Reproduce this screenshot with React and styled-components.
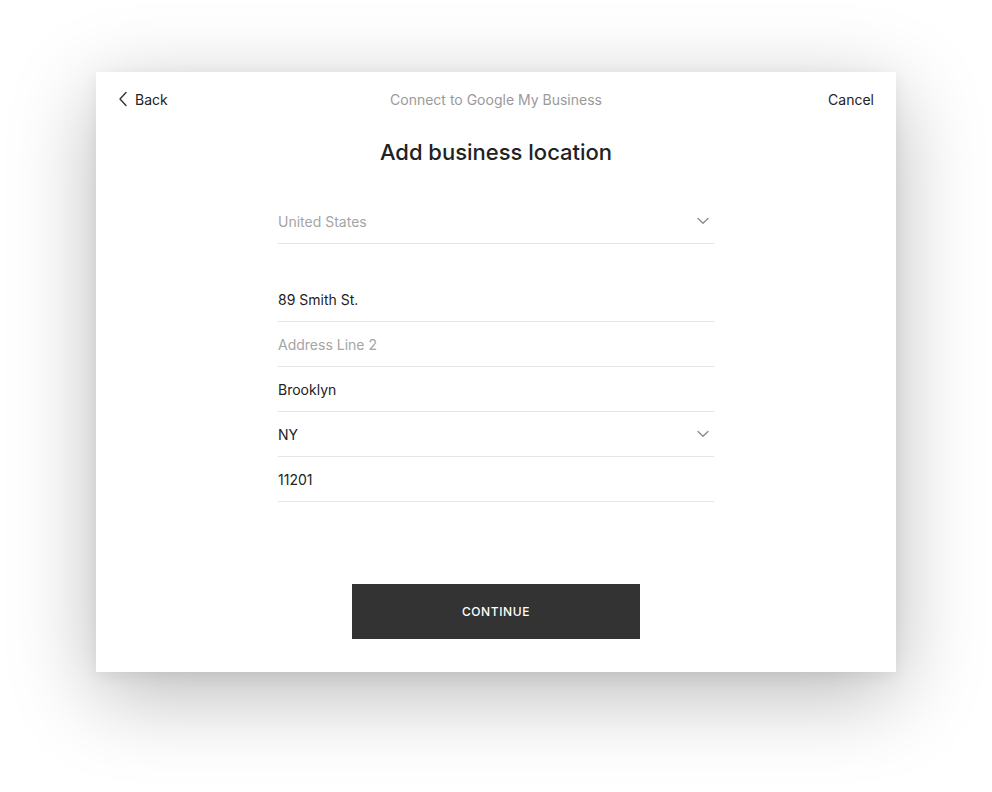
import React from 'react';
import styled, { createGlobalStyle } from 'styled-components';

const GlobalStyle = createGlobalStyle`
  html, body {
    margin: 0;
    padding: 0;
    background: #ffffff;
    font-family: Inter, "Liberation Sans", Arial, sans-serif;
    -webkit-font-smoothing: antialiased;
  }
`;

const ChevronLeft = () => (
  <svg width="10" height="16" viewBox="0 0 10 16" fill="none">
    <path d="M8 1.5L2 8l6 6.5" stroke="#333" strokeWidth="1.4" strokeLinecap="round" strokeLinejoin="round" />
  </svg>
);

const ChevronDown = () => (
  <svg width="12" height="8" viewBox="0 0 12 8" fill="none">
    <path d="M1 1.5l5 4.8 5-4.8" stroke="#8a8a8a" strokeWidth="1.3" strokeLinecap="round" strokeLinejoin="round" />
  </svg>
);

const fields = [
  { value: '89 Smith St.' },
  { value: 'Address Line 2', placeholder: true },
  { value: 'Brooklyn' },
  { value: 'NY', select: true },
  { value: '11201' }
];

const App = () => {
  return (
    <>
      <GlobalStyle />
      <StPage>
        <StModal>
          <StHeader>
            <StNavButton>
              <ChevronLeft />
              Back
            </StNavButton>
            <StHeaderTitle>Connect to Google My Business</StHeaderTitle>
            <StNavButton $right>Cancel</StNavButton>
          </StHeader>

          <StTitle>Add business location</StTitle>

          <StForm>
            <StRow>
              <StValue $placeholder>United States</StValue>
              <ChevronDown />
            </StRow>

            <StGroup>
              {fields.map((f) => (
                <StRow key={f.value}>
                  <StValue $placeholder={f.placeholder}>{f.value}</StValue>
                  {f.select && <ChevronDown />}
                </StRow>
              ))}
            </StGroup>
          </StForm>

          <StButton>Continue</StButton>
        </StModal>
      </StPage>
    </>
  );
};

export default App;

const StPage = styled.div`
  display: flex;
  justify-content: center;
  padding-top: 72px;
  height: 792px;
  box-sizing: border-box;
`;

const StModal = styled.div`
  width: 800px;
  height: 600px;
  background: #ffffff;
  box-shadow: 0 22px 80px rgba(0, 0, 0, 0.28), 0 4px 14px rgba(0, 0, 0, 0.06);
  display: flex;
  flex-direction: column;
  align-items: center;
`;

const StHeader = styled.div`
  width: 100%;
  height: 54px;
  box-sizing: border-box;
  padding: 0 22px;
  display: grid;
  grid-template-columns: 1fr auto 1fr;
  align-items: center;
`;

const StNavButton = styled.div`
  display: flex;
  align-items: center;
  justify-content: ${(p) => (p.$right ? 'flex-end' : 'flex-start')};
  gap: 7px;
  font-size: 14px;
  color: #222;
  cursor: pointer;
`;

const StHeaderTitle = styled.div`
  font-size: 14px;
  color: #9a9a9a;
`;

const StTitle = styled.h1`
  margin: 13px 0 0;
  font-size: 22px;
  line-height: 26px;
  font-weight: 500;
  color: #222;
`;

const StForm = styled.div`
  width: 436px;
  margin-top: 34px;
  display: flex;
  flex-direction: column;
  gap: 33px;
`;

const StGroup = styled.div`
  display: flex;
  flex-direction: column;
`;

const StRow = styled.div`
  height: 44px;
  border-bottom: 1px solid #e5e5e5;
  display: flex;
  align-items: center;
  justify-content: space-between;
  padding-right: 5px;
`;

const StValue = styled.span`
  font-size: 14px;
  color: ${(p) => (p.$placeholder ? '#a5a5a5' : '#222')};
`;

const StButton = styled.button`
  margin-top: 82px;
  width: 288px;
  height: 55px;
  border: none;
  background: #333333;
  color: #ffffff;
  font-family: inherit;
  font-size: 12px;
  font-weight: 500;
  letter-spacing: 0.05em;
  text-transform: uppercase;
  cursor: pointer;
`;
